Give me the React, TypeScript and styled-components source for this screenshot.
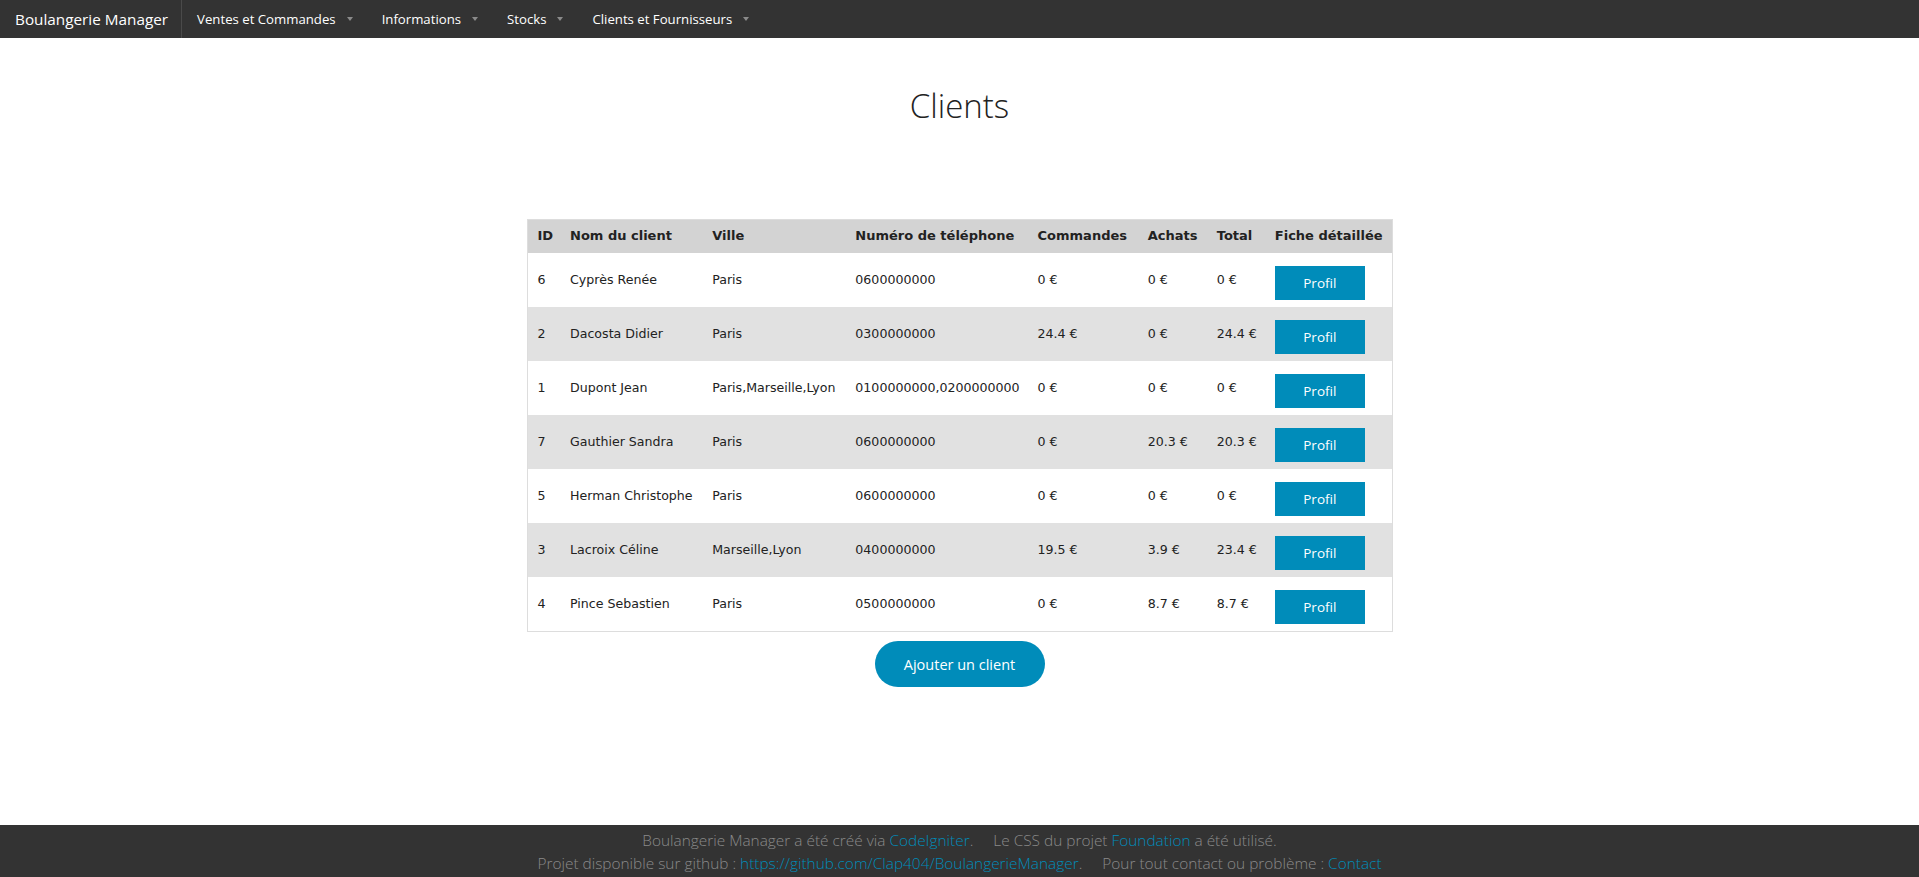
import styled, { createGlobalStyle } from 'styled-components'

const GlobalStyle = createGlobalStyle`
  html, body {
    margin: 0;
    padding: 0;
    background: #fff;
    font-family: "Open Sans", "Liberation Sans", sans-serif;
    color: #222;
  }
`

const Page = styled.div`
  display: flex;
  flex-direction: column;
  min-height: 100vh;
`

const TopBar = styled.nav`
  display: flex;
  align-items: stretch;
  height: 38px;
  background: #333;
`

const Brand = styled.a`
  display: flex;
  align-items: center;
  padding: 0 13px 0 15px;
  border-right: 1px solid #4a4a4a;
  color: #fff;
  font-size: 15.3px;
  text-decoration: none;
`

const Menu = styled.ul`
  display: flex;
  margin: 0;
  padding: 0;
  list-style: none;
`

const MenuItem = styled.li`
  display: flex;
  align-items: center;
  padding: 0 14px 0 15px;
  color: #fff;
  font-size: 13.2px;
  cursor: pointer;
`

const Caret = styled.span`
  width: 0;
  height: 0;
  margin-left: 11px;
  border-left: 3.5px solid transparent;
  border-right: 3.5px solid transparent;
  border-top: 4px solid #8a8a8a;
`

const Main = styled.main`
  flex: 1;
  display: flex;
  flex-direction: column;
  align-items: center;
  padding-top: 45px;
`

const Title = styled.h1`
  margin: 0;
  font-size: 33px;
  font-weight: 300;
  line-height: 46px;
  color: #222;
`

const Table = styled.table`
  margin-top: 90px;
  width: 866px;
  table-layout: fixed;
  border-collapse: collapse;
  border: 1px solid #ddd;
  font-family: "DejaVu Sans", Verdana, sans-serif;
  color: #222;
`

const Th = styled.th`
  padding: 0 10px 2px;
  height: 31px;
  text-align: left;
  font-size: 13px;
  font-weight: bold;
  white-space: nowrap;
`

const HeadRow = styled.tr`
  background: #d3d3d3;
`

const Row = styled.tr<{ $even: boolean }>`
  background: ${p => (p.$even ? '#e1e1e1' : '#fff')};
`

const Td = styled.td`
  padding: 0 10px 2px;
  height: 52px;
  font-size: 12.6px;
  white-space: nowrap;
  vertical-align: middle;
`

const ProfilButton = styled.a`
  display: flex;
  align-items: center;
  justify-content: center;
  width: 90px;
  height: 34px;
  margin-top: 8px;
  background: #008cba;
  color: #fff;
  font-family: "Open Sans", "Liberation Sans", sans-serif;
  font-size: 13.5px;
  text-decoration: none;
`

const AddButton = styled.a`
  display: flex;
  align-items: center;
  justify-content: center;
  margin-top: 9px;
  width: 170px;
  height: 46px;
  border-radius: 1000px;
  background: #008cba;
  color: #fff;
  font-size: 14.5px;
  text-decoration: none;
`

const Footer = styled.footer`
  background: #333;
  padding: 4px 0 2px;
  text-align: center;
  color: #8a8a8a;
  font-size: 15.4px;
  font-weight: 300;
  line-height: 23px;
  white-space: nowrap;
`

const FooterLine = styled.p`
  margin: 0;
`

const Link = styled.a`
  color: #008cba;
  text-decoration: none;
`

const Gap = styled.span`
  display: inline-block;
  width: 20px;
`

const menu = ['Ventes et Commandes', 'Informations', 'Stocks', 'Clients et Fournisseurs']

const cols = [33, 142, 143, 182, 110, 69, 58, 127]
const headers = ['ID', 'Nom du client', 'Ville', 'Numéro de téléphone', 'Commandes', 'Achats', 'Total', 'Fiche détaillée']

const clients = [
  ['6', 'Cyprès Renée', 'Paris', '0600000000', '0 €', '0 €', '0 €'],
  ['2', 'Dacosta Didier', 'Paris', '0300000000', '24.4 €', '0 €', '24.4 €'],
  ['1', 'Dupont Jean', 'Paris,Marseille,Lyon', '0100000000,0200000000', '0 €', '0 €', '0 €'],
  ['7', 'Gauthier Sandra', 'Paris', '0600000000', '0 €', '20.3 €', '20.3 €'],
  ['5', 'Herman Christophe', 'Paris', '0600000000', '0 €', '0 €', '0 €'],
  ['3', 'Lacroix Céline', 'Marseille,Lyon', '0400000000', '19.5 €', '3.9 €', '23.4 €'],
  ['4', 'Pince Sebastien', 'Paris', '0500000000', '0 €', '8.7 €', '8.7 €'],
]

const App = () => {
  return (
    <Page>
      <GlobalStyle />
      <TopBar>
        <Brand href="#">Boulangerie Manager</Brand>
        <Menu>
          {menu.map(m => (
            <MenuItem key={m}>
              {m}
              <Caret />
            </MenuItem>
          ))}
        </Menu>
      </TopBar>
      <Main>
        <Title>Clients</Title>
        <Table>
          <colgroup>
            {cols.map((w, i) => (
              <col key={i} style={{ width: w }} />
            ))}
          </colgroup>
          <thead>
            <HeadRow>
              {headers.map(h => (
                <Th key={h}>{h}</Th>
              ))}
            </HeadRow>
          </thead>
          <tbody>
            {clients.map((c, i) => (
              <Row key={c[0]} $even={i % 2 === 1}>
                {c.map((v, j) => (
                  <Td key={j}>{v}</Td>
                ))}
                <Td>
                  <ProfilButton href="#">Profil</ProfilButton>
                </Td>
              </Row>
            ))}
          </tbody>
        </Table>
        <AddButton href="#">Ajouter un client</AddButton>
      </Main>
      <Footer>
        <FooterLine>
          Boulangerie Manager a été créé via <Link href="#">CodeIgniter</Link>.<Gap />Le CSS du projet{' '}
          <Link href="#">Foundation</Link> a été utilisé.
        </FooterLine>
        <FooterLine>
          Projet disponible sur github : <Link href="#">https://github.com/Clap404/BoulangerieManager</Link>.<Gap />
          Pour tout contact ou problème : <Link href="#">Contact</Link>
        </FooterLine>
      </Footer>
    </Page>
  )
}

export default App
